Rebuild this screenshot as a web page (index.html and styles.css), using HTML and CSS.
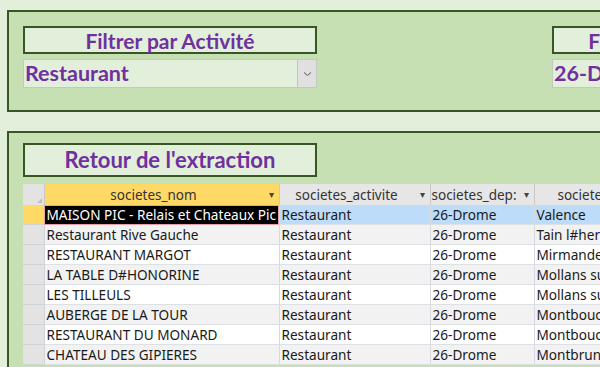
FILE: index.html
```html
<!DOCTYPE html>
<html>
<head>
<meta charset="utf-8">
<title>Extraction</title>
<link rel="stylesheet" href="styles.css">
</head>
<body>
<div class="panel panel-filtres">
  <div class="filtre">
    <div class="etiquette">Filtrer par Activité</div>
    <div class="combo"><span class="combo-val">Restaurant</span><span class="combo-btn"><svg width="9" height="6" viewBox="0 0 9 6"><path d="M1 1.5 L4.5 4.5 L8 1.5" fill="none" stroke="#555" stroke-width="1"/></svg></span></div>
  </div>
  <div class="filtre filtre-dep">
    <div class="etiquette">Filtrer par Département</div>
    <div class="combo"><span class="combo-val">26-Drome</span><span class="combo-btn"></span></div>
  </div>
</div>

<div class="panel panel-resultat">
  <div class="etiquette etiquette-grande">Retour de l'extraction</div>
  <table class="grille">
    <colgroup>
      <col class="c-sel"><col class="c-nom"><col class="c-act"><col class="c-dep"><col class="c-ville">
    </colgroup>
    <thead>
      <tr>
        <th class="sel-coin"><span class="coin"></span></th>
        <th class="th-actif">societes_nom<span class="fleche">▾</span></th>
        <th>societes_activite<span class="fleche">▾</span></th>
        <th class="th-dep">societes_dep:<span class="fleche">▾</span></th>
        <th class="th-ville">societes_ville</th>
      </tr>
    </thead>
    <tbody>
      <tr class="courant"><td class="sel"></td><td class="cell-actif">MAISON PIC - Relais et Chateaux Pic</td><td>Restaurant</td><td>26-Drome</td><td>Valence</td></tr>
      <tr class="alt"><td class="sel"></td><td>Restaurant Rive Gauche</td><td>Restaurant</td><td>26-Drome</td><td>Tain l#hermitage</td></tr>
      <tr><td class="sel"></td><td>RESTAURANT MARGOT</td><td>Restaurant</td><td>26-Drome</td><td>Mirmande</td></tr>
      <tr class="alt"><td class="sel"></td><td>LA TABLE D#HONORINE</td><td>Restaurant</td><td>26-Drome</td><td>Mollans sur Ouveze</td></tr>
      <tr><td class="sel"></td><td>LES TILLEULS</td><td>Restaurant</td><td>26-Drome</td><td>Mollans sur Ouveze</td></tr>
      <tr class="alt"><td class="sel"></td><td>AUBERGE DE LA TOUR</td><td>Restaurant</td><td>26-Drome</td><td>Montboucher</td></tr>
      <tr><td class="sel"></td><td>RESTAURANT DU MONARD</td><td>Restaurant</td><td>26-Drome</td><td>Montboucher</td></tr>
      <tr class="alt"><td class="sel"></td><td>CHATEAU DES GIPIERES</td><td>Restaurant</td><td>26-Drome</td><td>Montbrun les Bains</td></tr>
    </tbody>
  </table>
</div>
</body>
</html>
```

FILE: styles.css
```css
html, body {
	margin: 0;
	padding: 0;
}
body {
	background: #e2efda;
	width: 600px;
	height: 367px;
	overflow: hidden;
	font-family: "Noto Sans", "Open Sans", sans-serif;
}
.panel {
	background: #c6e0b4;
	border: 2px solid #375623;
	border-right: none;
	margin-left: 7px;
	width: 700px;
	box-sizing: border-box;
}
.panel-filtres {
	margin-top: 10px;
	height: 102px;
	padding: 14px 0 0 14px;
	display: flex;
	gap: 235px;
}
.panel-resultat {
	margin-top: 19px;
	height: 260px;
	padding: 10px 0 0 14px;
}
.filtre {
	width: 294px;
	display: flex;
	flex-direction: column;
	gap: 5px;
}
.etiquette {
	box-sizing: border-box;
	width: 294px;
	height: 28px;
	background: #e2efda;
	border: 2px solid #375623;
	color: #7030a0;
	font-family: Lato, "Liberation Sans", sans-serif;
	font-weight: bold;
	font-size: 21px;
	line-height: 25px;
	text-align: center;
}
.etiquette-grande {
	height: 34px;
	font-size: 22px;
	line-height: 30px;
}
.combo {
	box-sizing: border-box;
	width: 294px;
	height: 29px;
	background: #e2efda;
	border: 1px solid #c3c9bf;
	display: flex;
}
.combo-val {
	flex: 1;
	color: #7030a0;
	font-family: Lato, "Liberation Sans", sans-serif;
	font-weight: bold;
	font-size: 21.5px;
	line-height: 27px;
	padding-left: 1px;
}
.combo-btn {
	width: 18px;
	background: #e0e0e0;
	border-left: 1px solid #c3c3c3;
	display: flex;
	align-items: center;
	justify-content: center;
}

/* grille de resultats */
.grille {
	margin-top: 7px;
	border-collapse: collapse;
	table-layout: fixed;
	width: 640px;
	font-size: 13.6px;
	color: #1a1a1a;
}
.c-sel { width: 21px; }
.c-nom { width: 235px; }
.c-act { width: 151px; }
.c-dep { width: 104px; }
.c-ville { width: 129px; }
.grille th {
	height: 21px;
	padding: 0 18px 0 2px;
	background: #e6e6e6;
	border-right: 1px solid #c8c8c8;
	font-weight: normal;
	font-size: 13.5px;
	color: #333;
	white-space: nowrap;
	overflow: hidden;
	position: relative;
	text-align: center;
}
.grille th.th-actif {
	background: #ffd966;
}
.grille th.th-dep {
	text-align: left;
	padding-left: 1px;
}
.grille th.th-ville {
	padding-right: 2px;
}
.grille th.sel-coin {
	background: #e3e3e3;
	padding: 0;
}
.coin {
	position: absolute;
	right: 2px;
	bottom: 2px;
	width: 0;
	height: 0;
	border-left: 5px solid transparent;
	border-bottom: 5px solid #c0c0c0;
}
.fleche {
	position: absolute;
	right: 5px;
	top: 3px;
	font-size: 10px;
	color: #444;
}
.grille td {
	height: 19px;
	padding: 0 2px;
	background: #fff;
	border-right: 1px solid #d7dbe0;
	border-bottom: 1px solid #dde1e6;
	white-space: nowrap;
	overflow: hidden;
	line-height: 19px;
}
.grille tr.alt td {
	background: #f2f2f2;
}
.grille td.sel {
	background: #e3e3e3;
	border-right: 1px solid #cfd3d8;
	border-bottom: 1px solid #d0d4d9;
}
.grille tr.alt td.sel {
	background: #e3e3e3;
}
.grille tr.courant td {
	background: #bcdcf9;
}
.grille tr.courant td.sel {
	background: #ffd966;
}
.grille tr.courant td.cell-actif {
	background: #000;
	color: #fff;
	outline: 1px solid #e8a0a8;
	outline-offset: -1px;
}
```
